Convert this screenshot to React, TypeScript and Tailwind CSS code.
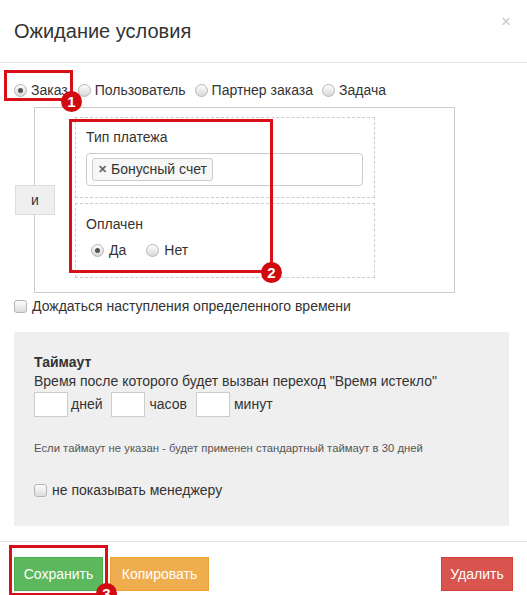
import React from 'react'

const font = { fontFamily: '"Liberation Sans", Arial, sans-serif' }

function Radio({ checked = false }: { checked?: boolean }): React.JSX.Element {
  return (
    <span className="inline-flex items-center justify-center w-[13px] h-[13px] rounded-full border border-[#b5b5b5] bg-gradient-to-b from-[#fdfdfd] to-[#d9d9d9] shrink-0">
      {checked && <span className="w-[5px] h-[5px] rounded-full bg-[#555]" />}
    </span>
  )
}

function Checkbox(): React.JSX.Element {
  return (
    <span className="inline-block w-[13px] h-[13px] rounded-[3px] border border-[#b5b5b5] bg-gradient-to-b from-[#fdfdfd] to-[#dcdcdc] shrink-0" />
  )
}

function Badge({ n, className }: { n: string; className: string }): React.JSX.Element {
  return (
    <span
      className={`absolute w-[21px] h-[21px] rounded-full bg-[#d10a10] text-white text-[15px] font-bold leading-[21px] text-center ${className}`}
    >
      {n}
    </span>
  )
}

export default function App(): React.JSX.Element {
  return (
    <div className="relative w-[527px] h-[595px] overflow-hidden bg-white text-[#333]" style={font}>
      {/* Header */}
      <div className="h-[63px] flex items-start justify-between border-b border-[#e5e5e5] pl-[14px] pr-[16px]">
        <h1 className="mt-[17px] text-[20px] leading-[28px] text-[#333]">Ожидание условия</h1>
        <span className="mt-[12px] text-[17px] leading-[20px] text-[#c8c8c8]">×</span>
      </div>

      {/* Body */}
      <div className="relative">
        {/* Source selector */}
        <div className="flex items-center h-[20px] mt-[17px] pl-[14px] text-[14px]">
          <div className="flex items-center gap-[4px]">
            <Radio checked />
            <span>Заказ</span>
          </div>
          <div className="flex items-center gap-[4px] ml-[10px]">
            <Radio />
            <span>Пользователь</span>
          </div>
          <div className="flex items-center gap-[4px] ml-[9px]">
            <Radio />
            <span>Партнер заказа</span>
          </div>
          <div className="flex items-center gap-[4px] ml-[9px]">
            <Radio />
            <span>Задача</span>
          </div>
        </div>

        {/* Condition group */}
        <div className="relative ml-[34px] mt-[7px] w-[421px] border border-[#ccc] pl-[40px] pt-[9px] pb-[14px]">
          <button
            type="button"
            className="absolute left-[-20px] top-[77px] w-[40px] h-[30px] bg-[#efefef] border border-[#ddd] text-[14px] text-[#333]"
          >
            и
          </button>
          <div className="w-[300px] border border-dashed border-[#ccc] pl-[10px] pr-[11px] pt-[9px] pb-[11px]">
            <div className="text-[14px] leading-[20px]">Тип платежа</div>
            <div className="mt-[6px] h-[33px] rounded-[4px] border border-[#ccc] flex items-center px-[5px]">
              <span className="inline-flex items-center h-[23px] px-[5px] gap-[4px] rounded-[3px] border border-[#ccc] bg-[#f7f7f7] text-[14px]">
                <span className="text-[11px] font-bold text-[#666]">✕</span>
                Бонусный счет
              </span>
            </div>
          </div>
          <div className="w-[300px] mt-[5px] border border-dashed border-[#ccc] pl-[10px] pt-[10px] pb-[17px]">
            <div className="text-[14px] leading-[20px]">Оплачен</div>
            <div className="mt-[6px] h-[20px] flex items-center text-[14px]">
              <div className="flex items-center gap-[5px] pl-[5px]">
                <Radio checked />
                <span>Да</span>
              </div>
              <div className="flex items-center gap-[5px] ml-[20px]">
                <Radio />
                <span>Нет</span>
              </div>
            </div>
          </div>
        </div>

        {/* Wait for time */}
        <div className="flex items-center gap-[5px] h-[20px] mt-[3px] pl-[14px] text-[14px]">
          <Checkbox />
          <span>Дождаться наступления определенного времени</span>
        </div>

        {/* Timeout panel */}
        <div className="mx-[14px] mt-[16px] w-[495px] bg-[#efefef] pl-[20px] pt-[20px] pb-[26px] text-[14px]">
          <div className="font-bold leading-[20px]">Таймаут</div>
          <div className="leading-[19px]">Время после которого будет вызван переход "Время истекло"</div>
          <div className="flex items-center h-[25px] mt-[1px]">
            <span className="w-[34px] h-[25px] bg-white border border-[#ccc]" />
            <span className="ml-[3px]">дней</span>
            <span className="ml-[8px] w-[34px] h-[25px] bg-white border border-[#ccc]" />
            <span className="ml-[5px]">часов</span>
            <span className="ml-[9px] w-[34px] h-[25px] bg-white border border-[#ccc]" />
            <span className="ml-[4px]">минут</span>
          </div>
          <div className="mt-[22px] text-[11.3px] leading-[18px] text-[#555]">
            Если таймаут не указан - будет применен стандартный таймаут в 30 дней
          </div>
          <div className="mt-[23px] flex items-center gap-[5px] h-[20px]">
            <Checkbox />
            <span>не показывать менеджеру</span>
          </div>
        </div>

        {/* Footer */}
        <div className="mt-[15px] border-t border-[#e5e5e5] pt-[15px] px-[14px] flex items-center text-[14px] text-white">
          <button type="button" className="w-[89px] h-[34px] bg-[#5cb85c] border border-[#4cae4c]">
            Сохранить
          </button>
          <button type="button" className="ml-[7px] w-[99px] h-[34px] bg-[#f0ad4e] border border-[#eea236]">
            Копировать
          </button>
          <button type="button" className="ml-auto w-[72px] h-[34px] bg-[#d9534f] border border-[#d43f3a]">
            Удалить
          </button>
        </div>
      </div>

      {/* Annotations */}
      <div className="absolute left-[4px] top-[70px] w-[69px] h-[31px] border-[3px] border-[#d80f16]" />
      <Badge n="1" className="left-[61px] top-[91px]" />
      <div className="absolute left-[69px] top-[119px] w-[204px] h-[154px] border-[3px] border-[#d80f16]" />
      <Badge n="2" className="left-[261px] top-[262px]" />
      <div className="absolute left-[9px] top-[545px] w-[99px] h-[51px] border-[3px] border-[#d80f16]" />
      <Badge n="3" className="left-[96px] top-[583px]" />
    </div>
  )
}
